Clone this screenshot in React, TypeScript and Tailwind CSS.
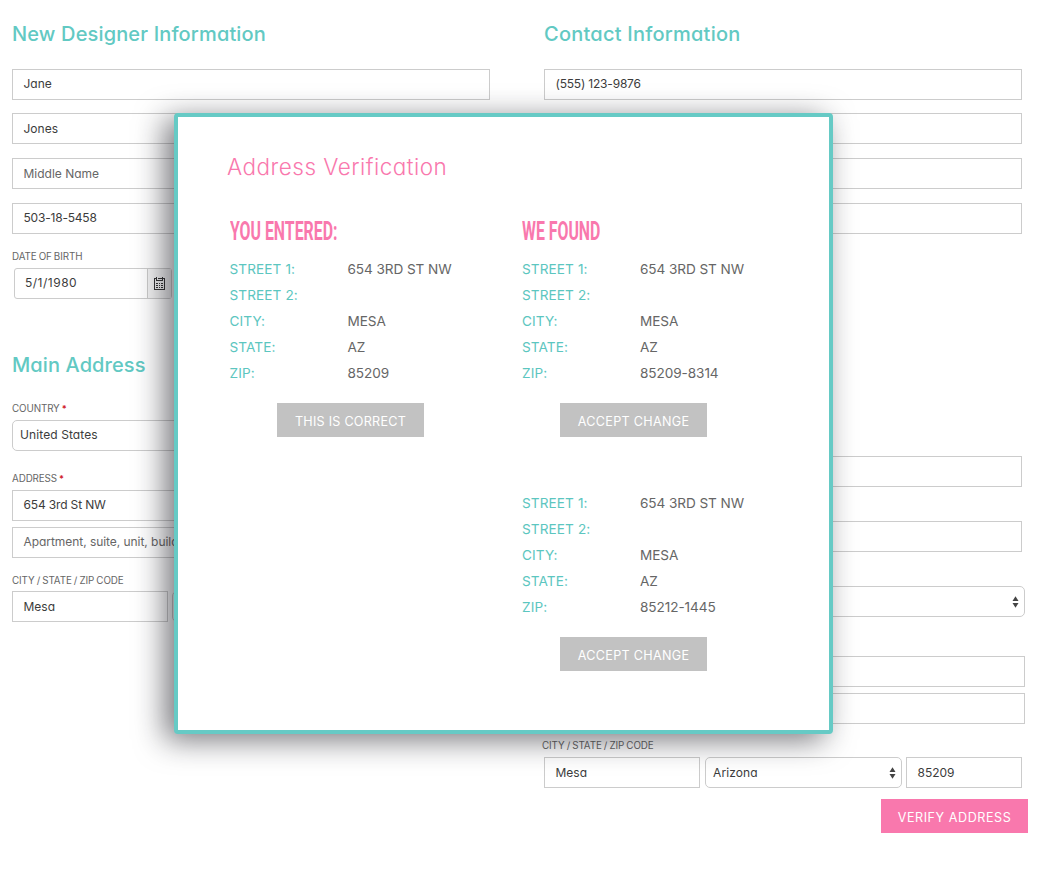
import React from 'react';

type Address = { street1: string; street2?: string; city: string; state: string; zip: string };

const cx = (...parts: (string | undefined)[]) => parts.filter(Boolean).join(' ');

function Heading({ children, className }: { children: React.ReactNode; className?: string }) {
  return (
    <h2 className={cx('whitespace-nowrap text-[20px] leading-6 font-medium text-[#62c9c3]', className)}>{children}</h2>
  );
}

function Label({ children, required, className }: { children: React.ReactNode; required?: boolean; className?: string }) {
  return (
    <div className={cx('whitespace-nowrap text-[9.8px] leading-3 tracking-[-0.1px] text-[#666] [word-spacing:-0.5px]', className)}>
      {children}
      {required && <span className="ml-[2px] text-[9px] font-bold text-[#d0202a]">*</span>}
    </div>
  );
}

function Field({ children, placeholder, className }: { children?: React.ReactNode; placeholder?: boolean; className?: string }) {
  return (
    <div
      className={cx(
        'flex h-[31px] shrink-0 items-center overflow-hidden whitespace-nowrap border border-[#ccc] bg-white pl-[10.5px] text-[12px]',
        placeholder ? 'text-[#666]' : 'text-[#3c3c3c]',
        className,
      )}
    >
      {children}
    </div>
  );
}

function Select({ children, className }: { children?: React.ReactNode; className?: string }) {
  return (
    <div
      className={cx(
        'flex h-[31px] shrink-0 items-center justify-between whitespace-nowrap rounded-[5px] border border-[#ccc] bg-white pl-[7px] pr-[5px] text-[12px] tracking-[0.1px] text-[#3c3c3c]',
        className,
      )}
    >
      <span>{children}</span>
      <svg className="h-[12px] w-[7px]" viewBox="0 0 7 12" fill="#444">
        <path d="M3.5 0.3 6.5 5H0.5zM3.5 11.7 6.5 7H0.5z" />
      </svg>
    </div>
  );
}

function CalendarIcon() {
  return (
    <svg className="h-[13px] w-[11px]" viewBox="0 0 11 13" fill="none" stroke="#333" shapeRendering="crispEdges">
      <path d="M0.5 1v11.5h10V1M0 1.5h2M9 1.5h2M3.5 1.5h4" />
      <path d="M2.5 0v3M8.5 0v3M2 3.5h7" />
      <path d="M2 6h2M5 6h1M7 6h2M2 8.5h2M5 8.5h1M7 8.5h2M2 10.5h2M5 10.5h1M7 10.5h2" strokeWidth="1" />
    </svg>
  );
}

function AddressList({ address }: { address: Address }) {
  const rows = [
    ['Street 1:', address.street1],
    ['Street 2:', address.street2],
    ['City:', address.city],
    ['State:', address.state],
    ['Zip:', address.zip],
  ];
  return (
    <dl className="grid auto-rows-[26px] grid-cols-[118px_1fr] items-center whitespace-nowrap text-[13.6px] font-[370] uppercase">
      {rows.map(([name, value]) => (
        <React.Fragment key={name}>
          <dt className="tracking-[0.1px] text-[#5cc6c0]">{name}</dt>
          <dd className="tracking-[-0.08px] text-[#666]">{value}</dd>
        </React.Fragment>
      ))}
    </dl>
  );
}

function Button({ children, className }: { children: React.ReactNode; className?: string }) {
  return (
    <button
      className={cx(
        'flex h-[34px] w-[147px] items-center justify-center whitespace-nowrap pt-[5px] text-[12.6px] uppercase text-white',
        className,
      )}
    >
      {children}
    </button>
  );
}

function ColumnTitle({ children }: { children: React.ReactNode }) {
  return (
    <h3 className="h-[30px] origin-left scale-x-[0.61] whitespace-nowrap font-[Roboto,sans-serif] text-[26px] leading-[30px] font-bold uppercase text-[#f978ad]">
      {children}
    </h3>
  );
}

function Modal() {
  return (
    <div className="absolute top-[113px] left-[174px] flex h-[621px] w-[659px] flex-col rounded-[4px] border-4 border-[#66cac5] bg-white pl-[49px] shadow-[-9px_6px_30px_rgba(20,20,30,0.58)]">
      <h1 className="mt-[35px] whitespace-nowrap text-[22.5px] leading-[30px] font-[350] tracking-[0.48px] text-[#f978ad]">
        Address Verification
      </h1>
      <div className="mt-[34px] flex">
        <section className="flex w-[292px] flex-col pl-[2.5px]">
          <ColumnTitle>You Entered:</ColumnTitle>
          <div className="mt-[10px]">
            <AddressList address={{ street1: '654 3rd St NW', city: 'Mesa', state: 'AZ', zip: '85209' }} />
          </div>
          <Button className="mt-[17px] ml-[47.5px] bg-[#c2c2c2] tracking-[0.25px]">This is correct</Button>
        </section>
        <section className="flex flex-col pl-[3px]">
          <ColumnTitle>We Found</ColumnTitle>
          <div className="mt-[10px]">
            <AddressList address={{ street1: '654 3rd St NW', city: 'Mesa', state: 'AZ', zip: '85209-8314' }} />
          </div>
          <Button className="mt-[17px] ml-[38px] bg-[#c2c2c2] tracking-[0.3px]">Accept change</Button>
          <div className="mt-[53px]">
            <AddressList address={{ street1: '654 3rd St NW', city: 'Mesa', state: 'AZ', zip: '85212-1445' }} />
          </div>
          <Button className="mt-[17px] ml-[38px] bg-[#c2c2c2] tracking-[0.3px]">Accept change</Button>
        </section>
      </div>
    </div>
  );
}

export default function App() {
  return (
    <main className="relative flex h-[870px] w-[1044px] overflow-hidden bg-white font-[Inter,sans-serif] [font-feature-settings:'cv11']">
      <div className="flex w-[532px] flex-col pl-3">
        <Heading className="mt-[22px] tracking-[0.15px]">New Designer Information</Heading>
        <Field className="mt-[23px] w-[478px] pb-px">Jane</Field>
        <Field className="mt-[13px] w-[478px]">Jones</Field>
        <Field className="mt-[14px] w-[478px]" placeholder>Middle Name</Field>
        <Field className="mt-[14px] w-[478px] pb-px tracking-[-0.2px]">503-18-5458</Field>
        <Label className="mt-[17px]">DATE OF BIRTH</Label>
        <div className="mt-[5px] ml-[2px] flex h-[31px] w-[158px] rounded-[3px] border border-[#ccc] bg-white text-[12px] text-[#3c3c3c]">
          <span className="flex w-[132px] items-center pl-[10px] pb-px tracking-[0.5px]">5/1/1980</span>
          <span className="flex flex-1 items-center justify-center border-l border-[#ccc] bg-[#f4f4f4]">
            <CalendarIcon />
          </span>
        </div>
        <Heading className="mt-[54px] tracking-[0.1px]">Main Address</Heading>
        <Label className="mt-[26px]" required>COUNTRY</Label>
        <Select className="mt-[5px] w-[478px] pb-px">United States</Select>
        <Label className="mt-[22px]" required>ADDRESS</Label>
        <Field className="mt-[5px] w-[478px] pb-px tracking-[-0.15px]">654 3rd St NW</Field>
        <Field className="mt-[6px] w-[478px] pb-px tracking-[-0.05px]" placeholder>Apartment, suite, unit, building</Field>
        <Label className="mt-[17px]">CITY / STATE / ZIP CODE</Label>
        <div className="mt-[4px] flex gap-1">
          <Field className="w-[156px]">Mesa</Field>
          <Select className="w-[197px]">Arizona</Select>
        </div>
      </div>

      <div className="flex flex-col pl-3">
        <Heading className="mt-[22px] tracking-[0.23px]">Contact Information</Heading>
        <Field className="mt-[23px] w-[478px] pb-px tracking-[-0.2px]">(555) 123-9876</Field>
        <Field className="mt-[13px] w-[478px]" />
        <Field className="mt-[14px] w-[478px]" />
        <Field className="mt-[14px] w-[478px]" />
        <Field className="mt-[222px] w-[478px]" />
        <Field className="mt-[34px] w-[478px]" />
        <Select className="mt-[34px] w-[481px]" />
        <Field className="mt-[39px] w-[481px]" />
        <Field className="mt-[6px] w-[481px]" />
        <Label className="mt-4 -ml-0.5">CITY / STATE / ZIP CODE</Label>
        <div className="mt-[5px] flex">
          <Field className="w-[156px]">Mesa</Field>
          <Select className="ml-[5px] w-[197px]">Arizona</Select>
          <Field className="ml-1 w-[116px]">85209</Field>
        </div>
        <Button className="mt-[11px] ml-[337px] bg-[#f978ad] tracking-[0.55px]">Verify address</Button>
      </div>

      <Modal />
    </main>
  );
}
